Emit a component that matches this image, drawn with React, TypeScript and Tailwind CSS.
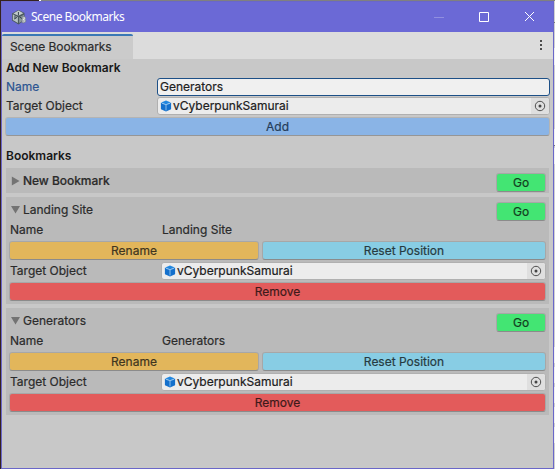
import type { ReactNode } from "react";

function UnityLogo() {
  return (
    <svg width="16" height="17" viewBox="0 0 16 17" className="shrink-0">
      <path d="M7.5 1L13.5 4V11L7.5 15.5L1 11.5V4.5Z" fill="#4b5960" />
      <path d="M7.5 1.5L12.3 4.2L7.5 6.8L2.4 4.5Z" fill="#c3cccd" />
      <path d="M1.8 5.3L6.9 8.2V14L1.8 10.9Z" fill="#b6c1c3" />
      <path d="M8.1 8.2L13 5.7V11L8.1 14Z" fill="#8c989c" />
      <path d="M7.4 3V6.5M3.2 10L6 8.4M8.5 8L11 9.5M4 6.6V9.5" stroke="#34424a" strokeWidth="1" />
      <path d="M11.3 7.5C14.8 7 15.3 9.5 14 10.5C15.8 12 14.5 14 11.1 13.8Z" fill="#e2e7e7" stroke="#657178" strokeWidth=".7" />
      <path d="M12.5 9H13.2M12.4 12H13.4" stroke="#46515a" />
    </svg>
  );
}

function Cube() {
  return (
    <svg width="12" height="12" viewBox="0 0 12 12" className="shrink-0">
      <path d="M6 .6L10.8 2.4L6 4.4L1.2 2.4Z" fill="#2187e0" />
      <path d="M.9 2.7L6 4.6V11.4L.9 9.2Z" fill="#1470cc" />
      <path d="M11.1 2.7L6 4.6V11.4L11.1 9.2Z" fill="#1470cc" />
      <path d="M1.8 3.1L6 4.8L10.2 3.1M6 4.8V10.5" fill="none" stroke="#a4d0f5" strokeWidth=".8" />
    </svg>
  );
}

function ObjectField() {
  return (
    <div className="flex h-[18px] flex-1 items-stretch overflow-hidden rounded-[3px] border border-[#b0b0b0] bg-[#ececec]">
      <div className="flex flex-1 items-center gap-[1px] pl-[2px]">
        <Cube />
        <span className="text-[#202020]">vCyberpunkSamurai</span>
      </div>
      <div className="flex w-[18px] items-center justify-center bg-[#dfdfdf]">
        <svg width="12" height="12" viewBox="0 0 12 12">
          <circle cx="6" cy="6" r="4.7" fill="none" stroke="#505050" />
          <circle cx="6" cy="6" r="1.5" fill="#444" />
        </svg>
      </div>
    </div>
  );
}

function Button({ className, children }: { className: string; children: ReactNode }) {
  return (
    <button className={"flex h-[19px] items-center justify-center rounded-[3px] border border-black/10 border-b-black/25 bg-clip-padding " + className}>
      {children}
    </button>
  );
}

function Header({ name, open }: { name: string; open: boolean }) {
  return (
    <div className="flex justify-between pl-[5px]">
      <div className="flex h-[16px] items-center gap-[3px]">
        <svg width="9" height="10" viewBox="0 0 9 10">
          <path d={open ? "M0 1H9L4.5 8.5Z" : "M.8 .5L8.5 5L.8 9.5Z"} fill="#737373" />
        </svg>
        <span className={open ? "" : "font-medium tracking-[-0.04px]"}>{name}</span>
      </div>
      <Button className="w-[50px] bg-[#43e573] text-[#123d1e]">Go</Button>
    </div>
  );
}

function Bookmark({ name }: { name: string }) {
  return (
    <section className="mt-1 h-[107px] bg-[#bababa] pt-[5px] pr-[3px]">
      <div className="h-[19px]"><Header name={name} open /></div>
      <div className="flex h-[18px] items-center pl-1">
        <span className="w-[152px]">Name</span>
        <span>{name}</span>
      </div>
      <div className="mt-[2px] flex gap-[3px] pl-[3px]">
        <Button className="w-[250px] bg-[#e2b65b] text-[#40351f]">Rename</Button>
        <Button className="flex-1 bg-[#88cde4] text-[#263b42]">Reset Position</Button>
      </div>
      <div className="mt-[2px] flex h-[18px] items-center pl-1">
        <span className="w-[151px]">Target Object</span>
        <ObjectField />
      </div>
      <div className="mt-[2px] pl-[3px]">
        <Button className="w-full bg-[#e35b5b] text-[#3e1a1a]">Remove</Button>
      </div>
    </section>
  );
}

export default function App() {
  return (
    <div className="flex h-[469px] w-[555px] flex-col overflow-hidden bg-[#c8c8c8] font-['Inter',sans-serif] text-[12px] leading-[16px] text-[#2b2b2b] [-webkit-text-stroke:0.2px]">
      <div className="flex h-px shrink-0">
        <div className="w-[39px] bg-[#35221e]" /><div className="w-[2px] bg-white" /><div className="flex-1 bg-[#808080]" />
      </div>
      <div className="flex min-h-0 flex-1">
        <div className="w-px bg-[#35221e]" />
        <main className="flex w-[553px] flex-col border border-[#6a67c9] bg-[#c8c8c8]">
          <header className="flex h-[30px] shrink-0 items-center justify-between bg-[#6b69d6] pr-[16px] pl-[9px] font-['Noto_Sans',sans-serif] text-white">
            <div className="flex items-center gap-1"><UnityLogo /><span className="text-[12px] tracking-[-0.47px] [-webkit-text-stroke:0px]">Scene Bookmarks</span></div>
            <svg width="104" height="14" viewBox="0 0 104 14" fill="none" stroke="white">
              <path d="M1 7.5H11" stroke="#918fe0" />
              <path d="M46.5 2.5H55.5V11.5H46.5Z" />
              <path d="M92 2L101 11M101 2L92 11" />
            </svg>
          </header>
          <div className="flex h-[27px] shrink-0 items-end justify-between bg-[#dcdcdc]">
            <div className="flex h-[25px] w-[131px] items-center rounded-t-[2px] border-t-2 border-[#3a78b5] bg-[#cbcbcb] pb-[2px] pl-2 tracking-[-0.08px]">Scene Bookmarks</div>
            <svg width="4" height="27" viewBox="0 0 4 27" className="mr-[10px]"><path d="M1 8h2v2H1zM1 12h2v2H1zM1 16h2v2H1z" fill="#4b4b4b" /></svg>
          </div>
          <div className="pr-[3px] pl-[4px]">
            <h2 className="mt-px h-[17px] font-semibold text-[#181818] [-webkit-text-stroke:0px]">Add New Bookmark</h2>
            <div className="flex h-[19px] items-center">
              <span className="w-[151px] text-[#2c5591]">Name</span>
              <div className="flex h-[18px] flex-1 items-center rounded-[3px] border border-[#1d5087] bg-[#f0f0f0] pl-[2px] text-[#202020]">Generators</div>
            </div>
            <div className="mt-px flex h-[18px] items-center">
              <span className="w-[151px]">Target Object</span>
              <ObjectField />
            </div>
            <div className="mt-[2px] -ml-px"><Button className="w-full bg-[#8ab4e6] text-[#253d5a]">Add</Button></div>
            <h2 className="mt-3 h-[20px] font-semibold text-[#181818] [-webkit-text-stroke:0px]">Bookmarks</h2>
            <div className="mr-px">
              <section className="h-[25px] bg-[#bababa] pt-[5px] pr-[3px]"><Header name="New Bookmark" open={false} /></section>
              <Bookmark name="Landing Site" />
              <Bookmark name="Generators" />
            </div>
          </div>
        </main>
        <div className="flex w-px flex-col bg-[#d0d0d0]">
          <div className="mt-[21px] h-px bg-[#777]" />
          <div className="mt-[25px] h-[17px] bg-[#f0f0f0]" />
          <div className="mt-[64px] h-4 bg-[#f0f0f0]" />
          <div className="h-px bg-[#777]" />
          <div className="mt-[2px] h-4 bg-[#f0f0f0]" />
          <div className="mt-[183px] h-4 bg-[#f0f0f0]" />
          <div className="mt-[4px] h-4 bg-[#f0f0f0]" />
          <div className="mt-[4px] h-4 bg-[#f0f0f0]" />
          <div className="mt-[4px] h-4 bg-[#f0f0f0]" />
          <div className="mt-[4px] h-4 bg-[#f0f0f0]" />
        </div>
      </div>
    </div>
  );
}
